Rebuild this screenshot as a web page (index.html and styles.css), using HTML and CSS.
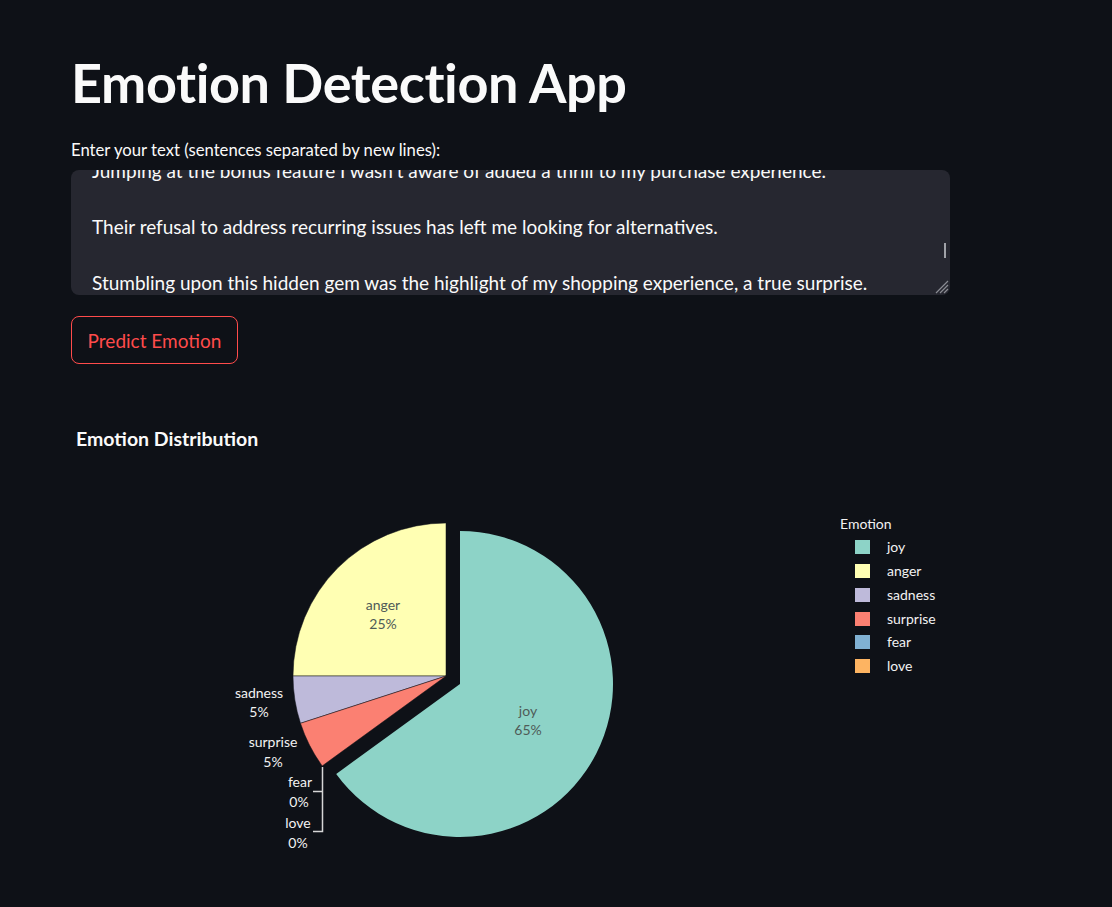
FILE: index.html
```html
<!DOCTYPE html>
<html lang="en">
<head>
<meta charset="utf-8">
<title>Emotion Detection App</title>
<link rel="stylesheet" href="styles.css">
</head>
<body>
<main class="main">
  <h1 class="title">Emotion Detection App</h1>
  <label class="field-label">Enter your text (sentences separated by new lines):</label>
  <div class="textarea">
    <div class="textarea-content">
      <p>Jumping at the bonus feature I wasn't aware of added a thrill to my purchase experience.</p>
      <p>&nbsp;</p>
      <p>Their refusal to address recurring issues has left me looking for alternatives.</p>
      <p>&nbsp;</p>
      <p>Stumbling upon this hidden gem was the highlight of my shopping experience, a true surprise.</p>
    </div>
    <span class="scroll-thumb"></span>
    <svg class="resize-handle" width="16" height="16" viewBox="0 0 16 16">
      <path d="M15 3 L3 15 M15 7 L7 15 M15 11 L11 15" stroke="#8a8c93" stroke-width="1.2"/>
    </svg>
  </div>
  <button class="btn">Predict Emotion</button>

  <section class="chart">
    <svg class="chart-svg" width="879" height="470" viewBox="71 410 879 470">
      <text x="76" y="446" class="chart-title">Emotion Distribution</text>

      <!-- pie slices -->
      <path d="M446,676 L293,676 A153,153 0 0 1 446,523 Z" fill="#ffffb3" stroke="#0e1117" stroke-width="0.5"/>
      <path d="M446,676 L300.5,723.3 A153,153 0 0 1 293,676 Z" fill="#bebada" stroke="#0e1117" stroke-width="0.5"/>
      <path d="M446,676 L322.2,765.9 A153,153 0 0 1 300.5,723.3 Z" fill="#fb8072" stroke="#0e1117" stroke-width="0.5"/>
      <path d="M460,684 L460,531 A153,153 0 1 1 336.2,773.9 Z" fill="#8dd3c7"/>

      <!-- inside labels -->
      <text class="lbl-in" x="383" y="610">anger</text>
      <text class="lbl-in" x="383" y="629">25%</text>
      <text class="lbl-in" x="528" y="716">joy</text>
      <text class="lbl-in" x="528" y="735">65%</text>

      <!-- outside labels -->
      <text class="lbl-out" x="259" y="698">sadness</text>
      <text class="lbl-out" x="259" y="717">5%</text>
      <text class="lbl-out" x="273" y="747">surprise</text>
      <text class="lbl-out" x="273" y="767">5%</text>
      <text class="lbl-out" x="300" y="787">fear</text>
      <text class="lbl-out" x="299" y="807">0%</text>
      <text class="lbl-out" x="298" y="828">love</text>
      <text class="lbl-out" x="298" y="848">0%</text>

      <!-- leader lines -->
      <path d="M322.5,767 L322.5,831.5 L313,831.5 M322.5,791.5 L313,791.5" fill="none" stroke="#d6d6d6" stroke-width="1.5"/>

      <!-- legend -->
      <text class="legend-title" x="840" y="529">Emotion</text>
      <rect x="855" y="540" width="15" height="14" fill="#8dd3c7"/>
      <text class="legend-item" x="887" y="552">joy</text>
      <rect x="855" y="564" width="15" height="14" fill="#ffffb3"/>
      <text class="legend-item" x="887" y="576">anger</text>
      <rect x="855" y="588" width="15" height="14" fill="#bebada"/>
      <text class="legend-item" x="887" y="600">sadness</text>
      <rect x="855" y="612" width="15" height="14" fill="#fb8072"/>
      <text class="legend-item" x="887" y="624">surprise</text>
      <rect x="855" y="635" width="15" height="14" fill="#80b1d3"/>
      <text class="legend-item" x="887" y="647">fear</text>
      <rect x="855" y="659" width="15" height="14" fill="#fdb462"/>
      <text class="legend-item" x="887" y="671">love</text>
    </svg>
  </section>
</main>
</body>
</html>
```
FILE: styles.css
```css
* { box-sizing: border-box; }

html, body {
  margin: 0;
  padding: 0;
  background: #0e1117;
  color: #fafafa;
  font-family: "Source Sans Pro", Lato, "Noto Sans", sans-serif;
}

.main {
  width: 879px;
  margin-left: 71px;
  padding-top: 47px;
  display: flex;
  flex-direction: column;
  align-items: flex-start;
}

.title {
  margin: 0;
  font-size: 54px;
  font-weight: 700;
  line-height: 72px;
  letter-spacing: -0.4px;
}

.field-label {
  margin-top: 20px;
  font-size: 16.7px;
  line-height: 22px;
  height: 22px;
}

.textarea {
  position: relative;
  margin-top: 9px;
  width: 879px;
  height: 125px;
  background: #262730;
  border-radius: 8px;
  overflow: hidden;
}

.textarea-content {
  margin-top: -13px;
  padding: 0 21px;
  font-size: 19px;
  line-height: 28px;
  color: #fafafa;
}

.textarea-content p {
  margin: 0;
  white-space: nowrap;
}

.scroll-thumb {
  position: absolute;
  right: 4px;
  top: 73px;
  width: 2px;
  height: 15px;
  background: #a0a2a8;
}

.resize-handle {
  position: absolute;
  right: 1px;
  bottom: 1px;
}

.btn {
  margin-top: 21px;
  width: 167px;
  height: 48px;
  background: transparent;
  border: 1px solid #ff4b4b;
  border-radius: 8px;
  color: #ff4b4b;
  font-family: inherit;
  font-size: 19px;
  padding: 0;
}

.chart {
  margin-top: 46px;
}

.chart-svg {
  display: block;
}

.chart-title {
  font-size: 19.5px;
  font-weight: 700;
  fill: #fafafa;
}

.lbl-in {
  font-size: 14px;
  fill: #4f5b58;
  text-anchor: middle;
}

.lbl-out {
  font-size: 14px;
  fill: #f2f2f2;
  text-anchor: middle;
}

.legend-title {
  font-size: 14px;
  fill: #f2f2f2;
}

.legend-item {
  font-size: 14px;
  fill: #f2f2f2;
}
```
